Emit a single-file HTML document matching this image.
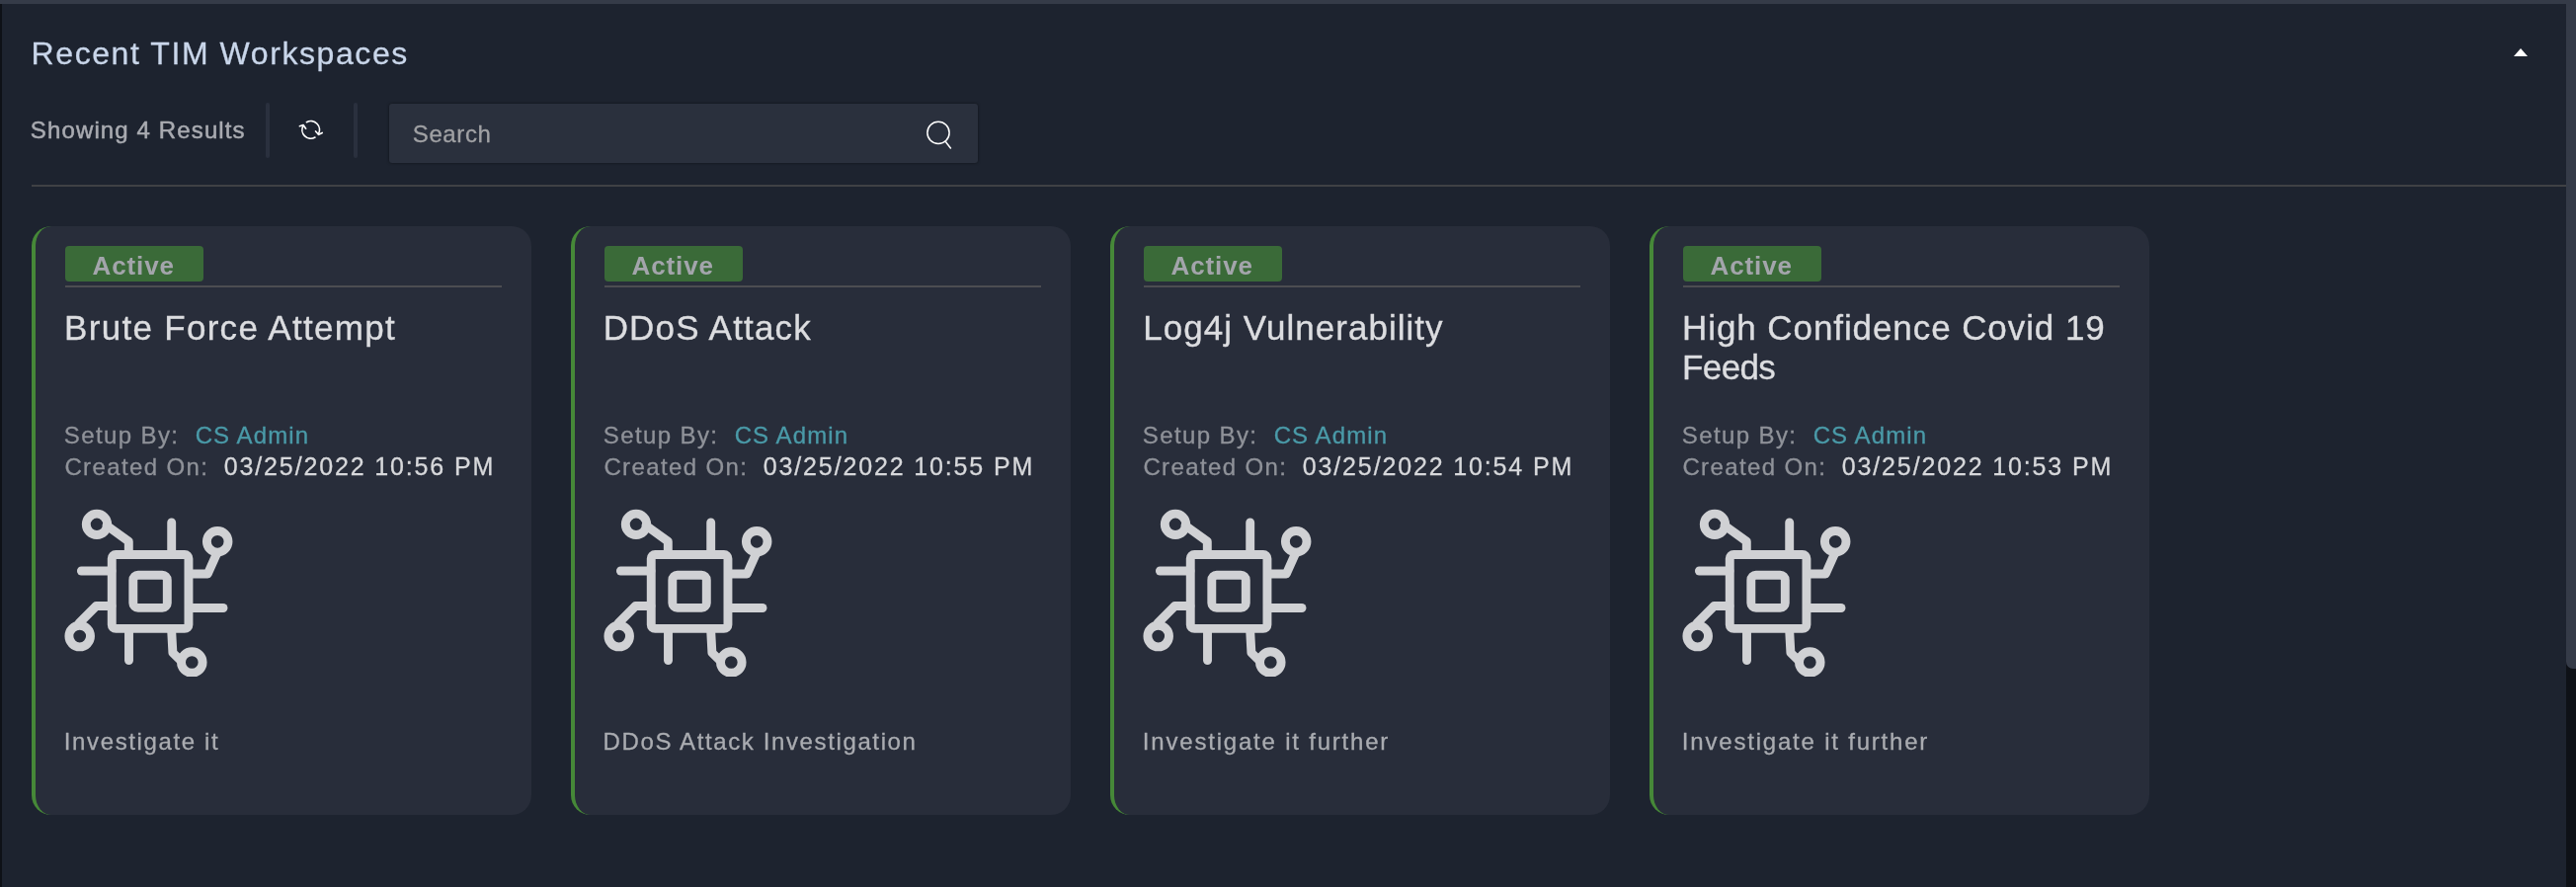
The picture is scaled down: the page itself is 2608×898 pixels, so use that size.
<!DOCTYPE html>
<html lang="en">
<head>
<meta charset="utf-8">
<title>Recent TIM Workspaces</title>
<style>
*{box-sizing:border-box;margin:0;padding:0}
html,body{width:2608px;height:898px;overflow:hidden;background:#1d232f}
body{position:relative;font-family:"Liberation Sans",sans-serif;color:#d5d6da}
.abs{position:absolute;white-space:nowrap}
.t{position:absolute;white-space:nowrap;font-weight:normal}
#head{position:absolute;left:0;top:4px;width:2598px;height:183px;will-change:transform}
#topbar{left:0;top:0;width:2608px;height:4px;background:#353b48}
#leftstrip{left:0;top:4px;width:2px;height:894px;background:#0e1117}
#track{left:2598px;top:4px;width:10px;height:894px;background:#0e1117}
#thumb{left:2598px;top:0;width:16px;height:677px;background:#353b48;border-radius:0 0 0 7px}
#caret{left:2545px;top:45px;width:0;height:0;border-left:7px solid transparent;border-right:7px solid transparent;border-bottom:8px solid #fff}
.sep{top:100px;width:4px;height:56px;border-radius:2px;background:#2a303e}
#search{left:394px;top:101px;width:596px;height:60px;border-radius:3px;background:#2a303d;box-shadow:0 0 3px rgba(0,0,0,.5)}
#rule{left:32px;top:183px;width:2566px;height:2px;background:#3f4145}
.card{will-change:transform;top:229px;width:506px;height:596px;border-radius:20px;background:#282d3a;border-left:4px solid #468838}
.badge{left:30px;top:20px;width:140px;height:36px;border-radius:4px;background:#3a6a38}
.line{left:30px;top:60px;width:442px;height:2px;background:#4c4d51}
.ico{left:24px;top:276px;width:180px;height:180px}
.title{font-size:32px;line-height:40px;color:#c9d6ea;-webkit-text-stroke:0.3px #c9d6ea}
.show{font-size:24px;line-height:32px;color:#a9abb1;-webkit-text-stroke:0.5px #a9abb1}
.srch{font-size:24px;line-height:32px;color:#a0a1a4;-webkit-text-stroke:0.3px #a0a1a4}
.t.act{font-size:26px;line-height:36px;color:#a3a5ab;font-weight:bold}
.name{font-size:35px;line-height:40px;color:#dcdde0;-webkit-text-stroke:0.35px #dcdde0}
.lbl{font-size:24px;line-height:32px;color:#8f9299;-webkit-text-stroke:0.3px #8f9299}
.adm{font-size:24px;line-height:32px;color:#4a9aa8;-webkit-text-stroke:0.3px #4a9aa8}
.date{font-size:25px;line-height:32px;color:#d7d8db;-webkit-text-stroke:0.3px #d7d8db}
.desc{font-size:24px;line-height:32px;color:#aaacb1;-webkit-text-stroke:0.3px #aaacb1}
#refresh{left:302px;top:115px}
</style>
</head>
<body>
<div class="abs" id="track"></div>
<div class="abs" id="thumb"></div>
<div class="abs" id="topbar"></div>
<div class="abs" id="leftstrip"></div>
<section id="head">
<h2 class="t title" id="t_title" style="left:31.59px;top:29.91px;letter-spacing:1.576px">Recent TIM Workspaces</h2>
<div class="abs" id="caret"></div>
<span class="t show" id="t_show" style="left:30.86px;top:111.68px;letter-spacing:1.124px">Showing 4 Results</span>
<div class="abs sep" style="left:269px"></div>
<svg class="abs" id="refresh" width="26" height="26" viewBox="0 0 26 26" fill="none" stroke="#fff" stroke-width="1.7" stroke-linecap="round" stroke-linejoin="round">
<path d="M8.43 4.7 A8.8 8.8 0 0 1 20.32 16.8"/>
<path d="M17.6 14 L20.6 17.3 L24.2 15.4"/>
<path d="M16.97 20.1 A8.8 8.8 0 0 1 5.08 8"/>
<path d="M7.6 11.2 L5 7.5 L1.4 8.7"/>
</svg>
<div class="abs sep" style="left:358px"></div>
<div class="abs" id="search">
<span class="t srch" id="t_search" style="left:23.81px;top:14.68px;letter-spacing:0.600px">Search</span>
<svg class="abs" style="left:540px;top:12px" width="36" height="36" viewBox="0 0 36 36" fill="none" stroke="#fff" stroke-width="1.5" stroke-linecap="butt">
<circle cx="16" cy="17.4" r="11.1"/><path d="M23.2 26.2 L28.8 33.5"/>
</svg>
</div>
<div class="abs" id="rule"></div>
</section>
<main id="cards">
<article class="abs card" style="left:32px">
<div class="abs badge"></div>
<span class="t act" id="c0_act" style="left:57.53px;top:21.99px;letter-spacing:0.883px">Active</span>
<div class="abs line"></div>
<h3 class="t name" id="c0_name" style="left:29.08px;top:83.12px;letter-spacing:1.296px">Brute Force Attempt</h3>
<span class="t lbl" id="c0_by" style="left:28.81px;top:195.68px;letter-spacing:1.390px">Setup By:</span>
<span class="t adm" id="c0_adm" style="left:161.64px;top:195.68px;letter-spacing:1.093px">CS Admin</span>
<span class="t lbl" id="c0_on" style="left:29.41px;top:227.68px;letter-spacing:1.385px">Created On:</span>
<span class="t date" id="c0_date" style="left:190.80px;top:227.34px;letter-spacing:1.855px">03/25/2022 10:56 PM</span>
<svg class="abs ico" viewBox="0 0 180 180"><g fill="none" stroke="#d0d1d4" stroke-width="8.9" stroke-linecap="round" stroke-linejoin="round">
<rect x="53.25" y="56.5" width="77.7" height="74.9" rx="4"/>
<rect x="74.8" y="77.2" width="34.5" height="33.2" rx="5"/>
<path d="M113.7 24 V56"/>
<path d="M22.4 73 H53"/>
<path d="M132 110.5 H166"/>
<path d="M70.5 132 V163.5"/>
<circle cx="38" cy="25.85" r="10.7"/>
<path d="M48 27 L70.3 43.2 V56"/>
<circle cx="160.2" cy="43.3" r="10.8"/>
<path d="M159.4 55.6 L150.3 76 H132"/>
<circle cx="20.7" cy="139.1" r="10.8"/>
<path d="M20 126 L37.4 108.5 H53"/>
<circle cx="134.3" cy="165.5" r="10.8"/>
<path d="M113.6 132 L114.9 155.9 L122 162.7"/>
</g></svg>
<p class="t desc" id="c0_desc" style="left:28.83px;top:505.68px;letter-spacing:1.624px">Investigate it</p>
</article>
<article class="abs card" style="left:578px">
<div class="abs badge"></div>
<span class="t act" id="c1_act" style="left:57.53px;top:21.99px;letter-spacing:0.883px">Active</span>
<div class="abs line"></div>
<h3 class="t name" id="c1_name" style="left:28.63px;top:83.12px;letter-spacing:1.169px">DDoS Attack</h3>
<span class="t lbl" id="c1_by" style="left:28.81px;top:195.68px;letter-spacing:1.390px">Setup By:</span>
<span class="t adm" id="c1_adm" style="left:161.64px;top:195.68px;letter-spacing:1.093px">CS Admin</span>
<span class="t lbl" id="c1_on" style="left:29.41px;top:227.68px;letter-spacing:1.385px">Created On:</span>
<span class="t date" id="c1_date" style="left:190.80px;top:227.34px;letter-spacing:1.855px">03/25/2022 10:55 PM</span>
<svg class="abs ico" viewBox="0 0 180 180"><g fill="none" stroke="#d0d1d4" stroke-width="8.9" stroke-linecap="round" stroke-linejoin="round">
<rect x="53.25" y="56.5" width="77.7" height="74.9" rx="4"/>
<rect x="74.8" y="77.2" width="34.5" height="33.2" rx="5"/>
<path d="M113.7 24 V56"/>
<path d="M22.4 73 H53"/>
<path d="M132 110.5 H166"/>
<path d="M70.5 132 V163.5"/>
<circle cx="38" cy="25.85" r="10.7"/>
<path d="M48 27 L70.3 43.2 V56"/>
<circle cx="160.2" cy="43.3" r="10.8"/>
<path d="M159.4 55.6 L150.3 76 H132"/>
<circle cx="20.7" cy="139.1" r="10.8"/>
<path d="M20 126 L37.4 108.5 H53"/>
<circle cx="134.3" cy="165.5" r="10.8"/>
<path d="M113.6 132 L114.9 155.9 L122 162.7"/>
</g></svg>
<p class="t desc" id="c1_desc" style="left:28.57px;top:505.68px;letter-spacing:1.619px">DDoS Attack Investigation</p>
</article>
<article class="abs card" style="left:1124px">
<div class="abs badge"></div>
<span class="t act" id="c2_act" style="left:57.53px;top:21.99px;letter-spacing:0.883px">Active</span>
<div class="abs line"></div>
<h3 class="t name" id="c2_name" style="left:29.34px;top:83.12px;letter-spacing:1.030px">Log4j Vulnerability</h3>
<span class="t lbl" id="c2_by" style="left:28.81px;top:195.68px;letter-spacing:1.390px">Setup By:</span>
<span class="t adm" id="c2_adm" style="left:161.64px;top:195.68px;letter-spacing:1.093px">CS Admin</span>
<span class="t lbl" id="c2_on" style="left:29.41px;top:227.68px;letter-spacing:1.385px">Created On:</span>
<span class="t date" id="c2_date" style="left:190.80px;top:227.34px;letter-spacing:1.855px">03/25/2022 10:54 PM</span>
<svg class="abs ico" viewBox="0 0 180 180"><g fill="none" stroke="#d0d1d4" stroke-width="8.9" stroke-linecap="round" stroke-linejoin="round">
<rect x="53.25" y="56.5" width="77.7" height="74.9" rx="4"/>
<rect x="74.8" y="77.2" width="34.5" height="33.2" rx="5"/>
<path d="M113.7 24 V56"/>
<path d="M22.4 73 H53"/>
<path d="M132 110.5 H166"/>
<path d="M70.5 132 V163.5"/>
<circle cx="38" cy="25.85" r="10.7"/>
<path d="M48 27 L70.3 43.2 V56"/>
<circle cx="160.2" cy="43.3" r="10.8"/>
<path d="M159.4 55.6 L150.3 76 H132"/>
<circle cx="20.7" cy="139.1" r="10.8"/>
<path d="M20 126 L37.4 108.5 H53"/>
<circle cx="134.3" cy="165.5" r="10.8"/>
<path d="M113.6 132 L114.9 155.9 L122 162.7"/>
</g></svg>
<p class="t desc" id="c2_desc" style="left:28.83px;top:505.68px;letter-spacing:1.798px">Investigate it further</p>
</article>
<article class="abs card" style="left:1670px">
<div class="abs badge"></div>
<span class="t act" id="c3_act" style="left:57.53px;top:21.99px;letter-spacing:0.883px">Active</span>
<div class="abs line"></div>
<h3 class="t name" id="c3_name" style="left:29.07px;top:83.12px;letter-spacing:0.914px">High Confidence Covid 19<br><span style="letter-spacing:-0.621px">Feeds</span></h3>
<span class="t lbl" id="c3_by" style="left:28.81px;top:195.68px;letter-spacing:1.390px">Setup By:</span>
<span class="t adm" id="c3_adm" style="left:161.64px;top:195.68px;letter-spacing:1.093px">CS Admin</span>
<span class="t lbl" id="c3_on" style="left:29.41px;top:227.68px;letter-spacing:1.385px">Created On:</span>
<span class="t date" id="c3_date" style="left:190.80px;top:227.34px;letter-spacing:1.855px">03/25/2022 10:53 PM</span>
<svg class="abs ico" viewBox="0 0 180 180"><g fill="none" stroke="#d0d1d4" stroke-width="8.9" stroke-linecap="round" stroke-linejoin="round">
<rect x="53.25" y="56.5" width="77.7" height="74.9" rx="4"/>
<rect x="74.8" y="77.2" width="34.5" height="33.2" rx="5"/>
<path d="M113.7 24 V56"/>
<path d="M22.4 73 H53"/>
<path d="M132 110.5 H166"/>
<path d="M70.5 132 V163.5"/>
<circle cx="38" cy="25.85" r="10.7"/>
<path d="M48 27 L70.3 43.2 V56"/>
<circle cx="160.2" cy="43.3" r="10.8"/>
<path d="M159.4 55.6 L150.3 76 H132"/>
<circle cx="20.7" cy="139.1" r="10.8"/>
<path d="M20 126 L37.4 108.5 H53"/>
<circle cx="134.3" cy="165.5" r="10.8"/>
<path d="M113.6 132 L114.9 155.9 L122 162.7"/>
</g></svg>
<p class="t desc" id="c3_desc" style="left:28.83px;top:505.68px;letter-spacing:1.798px">Investigate it further</p>
</article>
</main>
</body>
</html>
